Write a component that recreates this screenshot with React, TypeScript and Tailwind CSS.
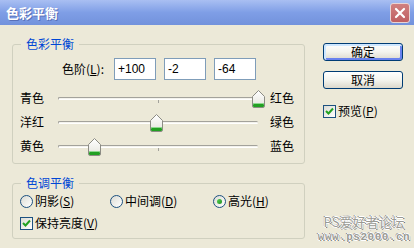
import React from "react";

function Thumb() {
  return (
    <svg width="13" height="18" viewBox="0 0 13 18">
      <defs>
        <linearGradient id="thumbg" x1="0" y1="0" x2="0" y2="1">
          <stop offset="0" stopColor="#ffffff" />
          <stop offset="1" stopColor="#e4e4dc" />
        </linearGradient>
      </defs>
      <path
        d="M0.5 6.5 L6.5 0.5 L12.5 6.5 L12.5 16 Q12.5 17.5 11 17.5 L2 17.5 Q0.5 17.5 0.5 16 Z"
        fill="url(#thumbg)"
        stroke="#8c8c84"
      />
      <rect x="1" y="13" width="11" height="1" fill="#8fd88f" />
      <rect x="1" y="14" width="11" height="3" rx="1" fill="#22a022" />
    </svg>
  );
}

function Slider({ left, right, value }: { left: string; right: string; value: number }) {
  return (
    <div className="flex items-center h-[24px]">
      <span className="w-[38px]">{left}</span>
      <div className="relative w-[200px] h-[24px]">
        <div className="absolute left-0 right-0 top-[11px] h-[3px] rounded-[2px] border-t border-l border-[#a3a29b] border-b border-b-white bg-[#f3f2ec]" />
        <div className="absolute left-[100px] top-[14px] w-px h-[3px] bg-[#a3a29b]" />
        <div className="absolute top-[4px]" style={{ left: 100 + value - 6 }}>
          <Thumb />
        </div>
      </div>
      <span className="ml-[12px]">{right}</span>
    </div>
  );
}

function Check() {
  return (
    <span className="w-[13px] h-[13px] border border-[#1c5180] bg-gradient-to-br from-[#dcdcd4] to-white flex items-center justify-center">
      <svg width="9" height="9" viewBox="0 0 9 9">
        <path d="M1 4 L3.5 6.5 L8 1.5" stroke="#21a121" strokeWidth="2" fill="none" />
      </svg>
    </span>
  );
}

function Radio({ checked }: { checked?: boolean }) {
  return (
    <span className="w-[13px] h-[13px] rounded-full border border-[#1c5180] bg-gradient-to-br from-[#dcdcd4] to-white flex items-center justify-center">
      {checked && <span className="w-[5px] h-[5px] rounded-full bg-gradient-to-br from-[#55d355] to-[#1f8f1f]" />}
    </span>
  );
}

function Legend({ children }: { children: React.ReactNode }) {
  return <legend className="ml-[8px] px-[5px] text-[#0046d5] leading-[16px]">{children}</legend>;
}

export default function App() {
  return (
    <div className="w-[414px] h-[248px] bg-[#ece9d8] flex flex-col overflow-hidden font-['Noto_Sans_CJK_SC',sans-serif] text-[12px] leading-[14px] text-black">
      {/* Title bar */}
      <div className="h-[25px] flex items-center justify-between pl-[6px] pr-[4px] bg-gradient-to-b from-[#a9bff2] via-[#7f9ee6] to-[#7292dc]">
        <span className="text-white text-[13px] font-bold [text-shadow:1px_1px_0_#5870b8]">色彩平衡</span>
        <div className="w-[20px] h-[20px] rounded-[3px] border border-[#e8d4d4] bg-gradient-to-b from-[#d08080] to-[#bf5f62] flex items-center justify-center">
          <svg width="12" height="12" viewBox="0 0 12 12">
            <path d="M2 2 L10 10 M10 2 L2 10" stroke="white" strokeWidth="2.2" strokeLinecap="round" />
          </svg>
        </div>
      </div>

      {/* Body */}
      <div className="flex flex-1">
        {/* Left column */}
        <div className="ml-[12px] w-[293px] flex flex-col">
          <fieldset className="mt-[11px] border border-[#d0d0bf] rounded-[3px] pb-[5px]">
            <Legend>色彩平衡</Legend>
            <div className="mt-[6px] flex items-center h-[22px] pl-[49px]">
              <span className="w-[52px]">
                色阶(<span className="underline">L</span>):
              </span>
              <div className="flex gap-[8px]">
                {["+100", "-2", "-64"].map((v) => (
                  <div key={v} className="w-[42px] h-[22px] border border-[#7f9db9] bg-white flex items-center px-[3px] font-['Liberation_Sans',sans-serif] text-[12px]">
                    {v}
                  </div>
                ))}
              </div>
            </div>
            <div className="mt-[6px] pl-[7px] flex flex-col">
              <Slider left="青色" right="红色" value={100} />
              <Slider left="洋红" right="绿色" value={-2} />
              <Slider left="黄色" right="蓝色" value={-64} />
            </div>
          </fieldset>

          <fieldset className="mt-[11px] border border-[#d0d0bf] rounded-[3px] pb-[6px]">
            <Legend>色调平衡</Legend>
            <div className="mt-[1px] flex items-center h-[18px] pl-[7px]">
              <div className="w-[90px] flex items-center gap-[2px]">
                <Radio />
                <span>
                  阴影(<span className="underline">S</span>)
                </span>
              </div>
              <div className="w-[103px] flex items-center gap-[2px]">
                <Radio />
                <span>
                  中间调(<span className="underline">D</span>)
                </span>
              </div>
              <div className="flex items-center gap-[2px]">
                <Radio checked />
                <span>
                  高光(<span className="underline">H</span>)
                </span>
              </div>
            </div>
            <div className="mt-[4px] flex items-center h-[18px] pl-[7px] gap-[2px]">
              <Check />
              <span>
                保持亮度(<span className="underline">V</span>)
              </span>
            </div>
          </fieldset>
        </div>

        {/* Right column */}
        <div className="ml-[18px] w-[82px] flex flex-col">
          <button className="mt-[18px] w-[80px] h-[18px] rounded-[3px] border border-[#003c74] bg-gradient-to-b from-white via-[#f4f4ee] to-[#dcd8cc] [box-shadow:inset_1px_1px_0_1px_#cee7ff,inset_-1px_-1px_0_1px_#6982ee] flex items-center justify-center">
            确定
          </button>
          <button className="mt-[10px] w-[80px] h-[18px] rounded-[3px] border border-[#003c74] bg-gradient-to-b from-white via-[#f4f4ee] to-[#dcd8cc] flex items-center justify-center">
            取消
          </button>
          <div className="mt-[15px] flex items-center gap-[2px]">
            <Check />
            <span>
              预览(<span className="underline">P</span>)
            </span>
          </div>
          <div className="mt-auto mb-[4px] flex flex-col items-center gap-[2px] text-[#9a9a94] [text-shadow:1px_0_0_#fff,-1px_0_0_#fff,0_1px_0_#fff,0_-1px_0_#fff,1px_1px_0_#555,-1px_-1px_0_#777]">
            <span className="text-[13px] leading-[15px]">PS爱好者论坛</span>
            <span className="text-[11px] leading-[13px] tracking-[0.5px] font-['Liberation_Mono',monospace] font-bold">www.ps2000.cn</span>
          </div>
        </div>
      </div>
    </div>
  );
}
